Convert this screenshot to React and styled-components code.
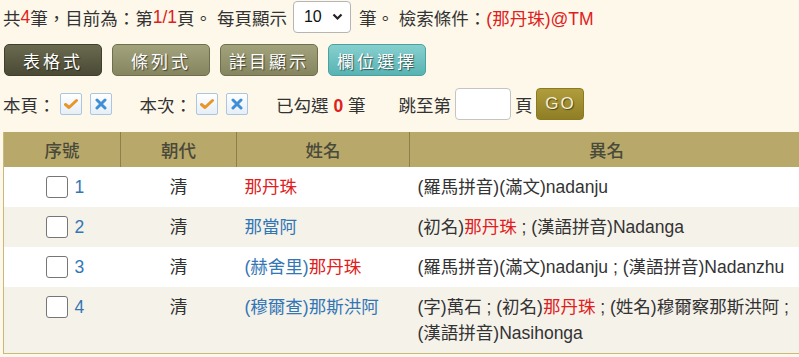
import styled, { createGlobalStyle } from "styled-components";

const GlobalStyle = createGlobalStyle`
  html, body {
    margin: 0;
    padding: 0;
    background: #fdf8ea;
  }
  body {
    font-family: "Liberation Sans", "Noto Sans CJK TC", sans-serif;
    font-size: 17.5px;
    color: #333;
    overflow: hidden;
  }
`;

const Page = styled.div`
  width: 799px;
  padding: 1px 0 0 3px;
  box-sizing: border-box;
`;

const InfoBar = styled.div`
  display: flex;
  align-items: center;
  height: 32px;
  white-space: nowrap;
`;

const Red = styled.span`
  color: #e02020;
  font-weight: ${(p) => (p.$bold ? "bold" : "normal")};
`;

const Select = styled.div`
  display: inline-flex;
  align-items: center;
  justify-content: space-between;
  box-sizing: border-box;
  width: 58px;
  height: 32px;
  margin: 0 8px 0 6px;
  padding: 0 7px 0 10px;
  border: 1px solid #b5b5b5;
  border-radius: 4px;
  background: #fff;
  color: #111;
  font-size: 16px;
`;

const ButtonBar = styled.div`
  display: flex;
  gap: 10px;
  margin-top: 11px;
  padding-left: 1px;
`;

const palettes = {
  dark: { top: "#6a6a50", bottom: "#4a4a35", border: "#3f3f2c" },
  olive: { top: "#a2a27c", bottom: "#85855f", border: "#6f6f4d" },
  teal: { top: "#86d0cf", bottom: "#58b3b2", border: "#4aa1a0" },
};

const ViewButton = styled.button`
  width: 98px;
  height: 32px;
  padding: 0;
  border: 1px solid ${(p) => palettes[p.$tone].border};
  border-radius: 5px;
  background: linear-gradient(${(p) => palettes[p.$tone].top}, ${(p) => palettes[p.$tone].bottom});
  color: #fff;
  font-family: "Noto Sans CJK TC", sans-serif;
  font-size: 17px;
  letter-spacing: 3px;
  text-shadow: 1px 1px 1px rgba(0, 0, 0, 0.55);
  cursor: pointer;
`;

const ToolBar = styled.div`
  display: flex;
  align-items: center;
  height: 32px;
  margin-top: 12px;
  white-space: nowrap;
`;

const Group = styled.div`
  display: flex;
  align-items: center;
  gap: ${(p) => p.$gap ?? 4}px;
  margin-right: ${(p) => p.$space || 0}px;
`;

const IconBox = styled.span`
  display: inline-flex;
  align-items: center;
  justify-content: center;
  width: 22px;
  height: 22px;
  box-sizing: border-box;
  border: 1px solid #a9c6e2;
  border-radius: 2px;
  background: linear-gradient(#ffffff, #e6eef7);
  & + & {
    margin-left: 4px;
  }
`;

const PageInput = styled.input`
  width: 56px;
  height: 32px;
  box-sizing: border-box;
  border: 1px solid #c4c4c4;
  border-radius: 4px;
  background: #fff;
`;

const GoButton = styled.button`
  width: 48px;
  height: 32px;
  padding: 0;
  border: 1px solid #8a7a22;
  border-radius: 4px;
  background: linear-gradient(#b09d3c, #8f7e25);
  color: #f4f0d8;
  font-family: "Liberation Sans", sans-serif;
  font-size: 17px;
  letter-spacing: 2px;
  text-shadow: 1px 1px 1px rgba(0, 0, 0, 0.5);
`;

const Table = styled.table`
  margin-top: 12px;
  width: 800px;
  border-collapse: collapse;
  table-layout: fixed;
  border-left: 1px solid #c9b97a;
  border-bottom: 1px solid #c9b97a;
`;

const Th = styled.th`
  height: 35px;
  padding: 0;
  background: #b8a86a;
  color: #4a4a3a;
  font-family: "Noto Sans CJK TC", sans-serif;
  font-size: 17.5px;
  font-weight: 500;
  text-align: center;
  & + & {
    border-left: 1px solid #8c7f48;
  }
`;

const Row = styled.tr`
  background: ${(p) => (p.$odd ? "#f5f2ea" : "#ffffff")};
`;

const Td = styled.td`
  padding: 7px 8px 7px ${(p) => p.$indent || 8}px;
  line-height: 26px;
  vertical-align: top;
  text-align: ${(p) => (p.$center ? "center" : "left")};
`;

const CheckBox = styled.span`
  display: inline-block;
  width: 22px;
  height: 22px;
  box-sizing: border-box;
  border: 1px solid #767676;
  border-radius: 3px;
  background: #fff;
  vertical-align: top;
  margin: 2px 6px 0 0;
`;

const Blue = styled.span`
  color: #3376b5;
`;

const CheckIcon = () => (
  <svg width="14" height="12" viewBox="0 0 14 12">
    <path d="M1.5 6.5 L5 9.5 L12.5 2.5" fill="none" stroke="#e8962a" strokeWidth="3" strokeLinecap="round" strokeLinejoin="round" />
  </svg>
);

const CrossIcon = () => (
  <svg width="12" height="12" viewBox="0 0 12 12">
    <path d="M2 2 L10 10 M10 2 L2 10" fill="none" stroke="#3f8fd6" strokeWidth="3" strokeLinecap="round" />
  </svg>
);

const rows = [
  {
    n: 1,
    name: <Red>那丹珠</Red>,
    alias: <>(羅馬拼音)(滿文)nadanju</>,
  },
  {
    n: 2,
    name: <Blue>那當阿</Blue>,
    alias: <>(初名)<Red>那丹珠</Red> ; (漢語拼音)Nadanga</>,
  },
  {
    n: 3,
    name: <><Blue>(赫舍里)</Blue><Red>那丹珠</Red></>,
    alias: <>(羅馬拼音)(滿文)nadanju ; (漢語拼音)Nadanzhu</>,
  },
  {
    n: 4,
    name: <Blue>(穆爾查)那斯洪阿</Blue>,
    alias: (
      <>
        (字)萬石 ; (初名)<Red>那丹珠</Red> ; (姓名)穆爾察那斯洪阿 ; (漢語拼音)Nasihonga
      </>
    ),
  },
];

export default function App() {
  return (
    <Page>
      <GlobalStyle />
      <InfoBar>
        共<Red>4</Red>筆，目前為：第<Red>1/1</Red>頁。 每頁顯示
        <Select>
          <span>10</span>
          <svg width="11" height="8" viewBox="0 0 11 8">
            <path d="M1.5 1.5 L5.5 5.5 L9.5 1.5" fill="none" stroke="#222" strokeWidth="2.2" />
          </svg>
        </Select>
        筆。 檢索條件：<Red>(那丹珠)@TM</Red>
      </InfoBar>

      <ButtonBar>
        <ViewButton $tone="dark">表格式</ViewButton>
        <ViewButton $tone="olive">條列式</ViewButton>
        <ViewButton $tone="olive">詳目顯示</ViewButton>
        <ViewButton $tone="teal">欄位選擇</ViewButton>
      </ButtonBar>

      <ToolBar>
        <Group $space={28}>
          <span>本頁：</span>
          <IconBox><CheckIcon /></IconBox>
          <IconBox><CrossIcon /></IconBox>
        </Group>
        <Group $space={28}>
          <span>本次：</span>
          <IconBox><CheckIcon /></IconBox>
          <IconBox><CrossIcon /></IconBox>
        </Group>
        <Group $space={33}>
          <span>
            已勾選 <Red $bold>0</Red> 筆
          </span>
        </Group>
        <Group $gap={4}>
          <span>跳至第</span>
          <PageInput />
          <span>頁</span>
          <GoButton>GO</GoButton>
        </Group>
      </ToolBar>

      <Table>
        <colgroup>
          <col style={{ width: 117 }} />
          <col style={{ width: 116 }} />
          <col style={{ width: 173 }} />
          <col />
        </colgroup>
        <thead>
          <tr>
            <Th>序號</Th>
            <Th>朝代</Th>
            <Th>姓名</Th>
            <Th>異名</Th>
          </tr>
        </thead>
        <tbody>
          {rows.map((r, i) => (
            <Row key={r.n} $odd={i % 2 === 1}>
              <Td $center $indent={14}>
                <CheckBox />
                <Blue>{r.n}</Blue>
              </Td>
              <Td $center>清</Td>
              <Td>{r.name}</Td>
              <Td>{r.alias}</Td>
            </Row>
          ))}
        </tbody>
      </Table>
    </Page>
  );
}
